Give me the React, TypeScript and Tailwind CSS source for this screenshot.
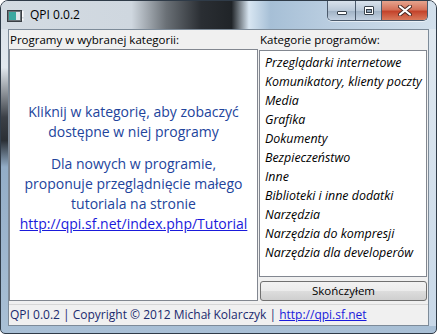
const categories = [
  'Przeglądarki internetowe',
  'Komunikatory, klienty poczty',
  'Media',
  'Grafika',
  'Dokumenty',
  'Bezpieczeństwo',
  'Inne',
  'Biblioteki i inne dodatki',
  'Narzędzia',
  'Narzędzia do kompresji',
  'Narzędzia dla developerów',
]

const AppIcon = () => (
  <svg width="17" height="14" viewBox="0 0 17 14">
    <rect x="0.5" y="1.5" width="14" height="11" fill="#6b7378" stroke="#3a3f44" />
    <rect x="2" y="3" width="7" height="8" fill="#3aa8a0" />
    <rect x="9" y="3" width="4" height="8" fill="#dfe6ea" />
    <rect x="15" y="2" width="1.5" height="6" fill="#ffffff" />
    <rect x="15" y="9.5" width="1.5" height="2" fill="#ffffff" />
  </svg>
)

const WindowButtons = () => (
  <div className="flex h-[20px] self-start rounded-b-[5px] border border-t-0 border-[#4b5a6c] overflow-hidden shadow-[0_1px_0_rgba(255,255,255,0.6)]">
    <div className="w-[28px] flex items-center justify-center bg-[linear-gradient(180deg,#d8e2ec_0%,#b9c8d8_50%,#9fb1c4_51%,#c3d2e2_100%)] border-r border-[#4b5a6c]">
      <div className="w-[10px] h-[4px] mt-[5px] bg-white border border-[#37414c] rounded-[1px]" />
    </div>
    <div className="w-[26px] flex items-center justify-center bg-[linear-gradient(180deg,#d8e2ec_0%,#b9c8d8_50%,#9fb1c4_51%,#c3d2e2_100%)] border-r border-[#4b5a6c]">
      <div className="w-[10px] h-[9px] bg-white border border-[#37414c] rounded-[1px] flex items-center justify-center">
        <div className="w-[6px] h-[4px] mt-[1px] bg-[#8ea2b6] border border-[#37414c]" />
      </div>
    </div>
    <div className="w-[45px] flex items-center justify-center bg-[linear-gradient(180deg,#e6a48e_0%,#d5725a_45%,#c4442c_55%,#d97a5c_100%)]">
      <svg width="14" height="11" viewBox="0 0 14 11">
        <path d="M2 1.5 L12 9.5 M12 1.5 L2 9.5" stroke="#4a2a24" strokeWidth="4" strokeLinecap="round" />
        <path d="M2 1.5 L12 9.5 M12 1.5 L2 9.5" stroke="#ffffff" strokeWidth="2.2" strokeLinecap="round" />
      </svg>
    </div>
  </div>
)

export default function App() {
  return (
    <div
      className="w-[437px] h-[334px] flex flex-col overflow-hidden rounded-t-[8px] rounded-b-[5px] border border-[#2f3b48] bg-[linear-gradient(180deg,#d7dfe7_0%,#e2e8ee_20%,#3b4047_35%,#2a2f35_42%,#93adc7_50%,#a9c0d6_100%)]"
      style={{ fontFamily: '"Segoe UI", "Open Sans", sans-serif' }}
    >
      <div className="h-[28px] shrink-0 flex items-start pl-[6px] pr-[8px] bg-[linear-gradient(90deg,#d3dbe2_0%,#cfd7df_30%,#6a7076_38%,#2a2e33_46%,#202428_53%,#d8e6f2_57%,#a6bfd6_62%,#b9cde0_75%,#d3e0ec_100%)]">
        <div className="mt-[8px]">
          <AppIcon />
        </div>
        <span className="ml-[6px] mt-[6px] text-[12px] text-black leading-[16px]">QPI 0.0.2</span>
        <div className="flex-1" />
        <WindowButtons />
      </div>

      <div className="flex flex-1 min-h-0">
        <div className="w-[7px] shrink-0" />
        <div className="flex-1 flex flex-col bg-[#f0f0f0] border border-[#7d8b99]">
          <div className="flex flex-1 min-h-0 text-[11.5px] text-black">
            <div className="w-[249px] flex flex-col">
              <div className="h-[19px] pl-[1px] leading-[19px]">Programy w wybranej kategorii:</div>
              <div className="flex-1 bg-white border border-[#828790] flex flex-col items-center pt-[52px] text-center text-[14px] leading-[20px] text-[#22449c]">
                <p>Kliknij w kategorię, aby zobaczyć</p>
                <p>dostępne w niej programy</p>
                <div className="h-[12px]" />
                <p>Dla nowych w programie,</p>
                <p>proponuje przeglądnięcie małego</p>
                <p>tutoriala na stronie</p>
                <p className="text-[#1a1adb] underline">http://qpi.sf.net/index.php/Tutorial</p>
              </div>
            </div>
            <div className="flex-1 flex flex-col pl-[1px] pr-[1px]">
              <div className="h-[20px] pl-[1px] leading-[19px]">Kategorie programów:</div>
              <ul className="h-[227px] bg-white border border-[#828790] pt-[2px] pl-[5px] italic text-[12.4px]">
                {categories.map((c) => (
                  <li key={c} className="h-[19px] leading-[19px] whitespace-nowrap">
                    {c}
                  </li>
                ))}
              </ul>
              <button className="mt-[4px] ml-[1px] h-[20px] rounded-[3px] border border-[#707070] bg-[linear-gradient(180deg,#f2f2f2_0%,#ebebeb_50%,#dddddd_51%,#cfcfcf_100%)] text-[11.5px] leading-[18px] text-black">
                Skończyłem
              </button>
            </div>
          </div>
          <div className="h-[21px] mt-[3px] border-t border-[#d7d7d7] pl-[1px] text-[12px] leading-[20px] text-[#1b2a6e] whitespace-nowrap">
            QPI 0.0.2 | Copyright © 2012 Michał Kolarczyk | <span className="text-[#1a1adb] underline">http://qpi.sf.net</span>
          </div>
        </div>
        <div className="w-[7px] shrink-0 bg-[linear-gradient(180deg,#dfe8f0_0%,#c8d8e8_100%)]" />
      </div>
      <div className="h-[7px] shrink-0" />
    </div>
  )
}
